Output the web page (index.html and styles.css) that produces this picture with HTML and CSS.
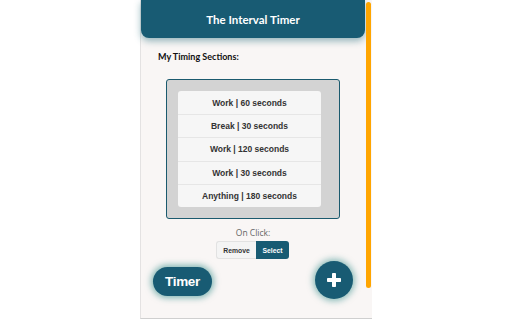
FILE: index.html
```html
<!DOCTYPE html>
<html>
<head>
<meta charset="utf-8">
<link rel="stylesheet" href="styles.css">
</head>
<body>
<div class="popup">
  <div class="content">
    <header class="header"><h1 class="title">The Interval Timer</h1></header>
    <div class="label">My Timing Sections:</div>
    <div class="box">
      <ul class="list">
        <li class="row">Work | 60 seconds</li>
        <li class="row">Break | 30 seconds</li>
        <li class="row">Work | 120 seconds</li>
        <li class="row">Work | 30 seconds</li>
        <li class="row">Anything | 180 seconds</li>
      </ul>
    </div>
    <div class="onclick">On Click:</div>
    <div class="toggle">
      <span class="tbtn remove">Remove</span>
      <span class="tbtn select">Select</span>
    </div>
    <div class="footer">
      <span class="timer">Timer</span>
      <span class="plus">
        <svg width="14" height="14" viewBox="0 0 14 14"><rect x="5" y="0" width="4" height="14" rx="0.8" fill="#fff"/><rect x="0" y="5" width="14" height="4" rx="0.8" fill="#fff"/></svg>
      </span>
    </div>
  </div>
  <div class="track"><div class="thumb"></div></div>
</div>
</body>
</html>
```
FILE: styles.css
```css
html, body {
  margin: 0;
  padding: 0;
  background: #ffffff;
}
body {
  display: flex;
  justify-content: center;
  width: 512px;
  height: 320px;
  overflow: hidden;
}
.popup {
  width: 231px;
  height: 318px;
  display: flex;
  background: #f9f6f5;
  border-left: 1px solid #e4e2e2;
  border-bottom: 1px solid #cfcfcf;
}
.content {
  width: 224px;
  display: flex;
  flex-direction: column;
}
.header {
  height: 38px;
  background: #185b73;
  border-radius: 0 0 8px 8px;
  box-shadow: 0 3px 7px rgba(24, 100, 115, 0.45);
  display: flex;
  align-items: center;
  justify-content: center;
}
.title {
  margin: 0;
  color: #ffffff;
  font-family: Lato, "Open Sans", sans-serif;
  font-weight: 700;
  font-size: 11.5px;
}
.label {
  margin-top: 13px;
  padding-left: 17px;
  height: 12px;
  line-height: 12px;
  font-family: Lato, "Open Sans", sans-serif;
  font-weight: 700;
  font-size: 9px;
  color: #111;
}
.box {
  margin: 16px 0 0 25px;
  border: 1px solid #1b5a6e;
  border-radius: 3px;
  background: #d3d3d3;
  padding: 11px 18px 11px 11px;
  box-sizing: border-box;
  width: 174px;
  height: 140px;
}
.list {
  margin: 0;
  padding: 0;
  list-style: none;
  background: #f6f6f6;
  border-radius: 3px;
}
.row {
  height: 23.2px;
  display: flex;
  align-items: center;
  justify-content: center;
  font-family: "Liberation Sans", Arial, sans-serif;
  font-weight: 700;
  font-size: 8.5px;
  color: #333;
  border-top: 1px solid #e6e6e6;
  box-sizing: border-box;
}
.row:first-child {
  border-top: none;
}
.onclick {
  margin-top: 8px;
  height: 12px;
  line-height: 12px;
  text-align: center;
  font-family: "Open Sans", sans-serif;
  font-size: 8.5px;
  color: #666;
}
.toggle {
  margin-top: 2px;
  display: flex;
  justify-content: center;
  padding-right: 1px;
}
.tbtn {
  height: 18px;
  display: flex;
  align-items: center;
  justify-content: center;
  font-family: "Liberation Sans", Arial, sans-serif;
  font-weight: 700;
  font-size: 6.8px;
  box-sizing: border-box;
}
.remove {
  width: 40px;
  background: #f4f4f4;
  color: #333;
  border: 1px solid #e2e2e2;
  border-right: none;
  border-radius: 3px 0 0 3px;
}
.select {
  width: 33px;
  background: #185b73;
  color: #fff;
  border-radius: 0 3px 3px 0;
}
.footer {
  margin-top: 1px;
  height: 39px;
  display: flex;
  align-items: center;
  justify-content: space-between;
  padding: 0 12px;
}
.timer {
  width: 59px;
  height: 29px;
  border-radius: 15px;
  background: #185b73;
  color: #fff;
  display: flex;
  align-items: center;
  justify-content: center;
  font-family: "Liberation Sans", Arial, sans-serif;
  font-weight: 700;
  font-size: 13.5px;
  letter-spacing: -0.3px;
  box-shadow: 0 0 6px 2px rgba(30, 130, 125, 0.55);
  margin-top: 3px;
}
.plus {
  width: 38px;
  height: 38px;
  border-radius: 50%;
  background: #185b73;
  display: flex;
  align-items: center;
  justify-content: center;
  box-shadow: 0 0 6px 2px rgba(30, 130, 125, 0.5);
}
.track {
  width: 7px;
}
.thumb {
  margin: 2px 0 0 1px;
  width: 5px;
  height: 286px;
  border-radius: 3px;
  background: #ffa500;
}
```
